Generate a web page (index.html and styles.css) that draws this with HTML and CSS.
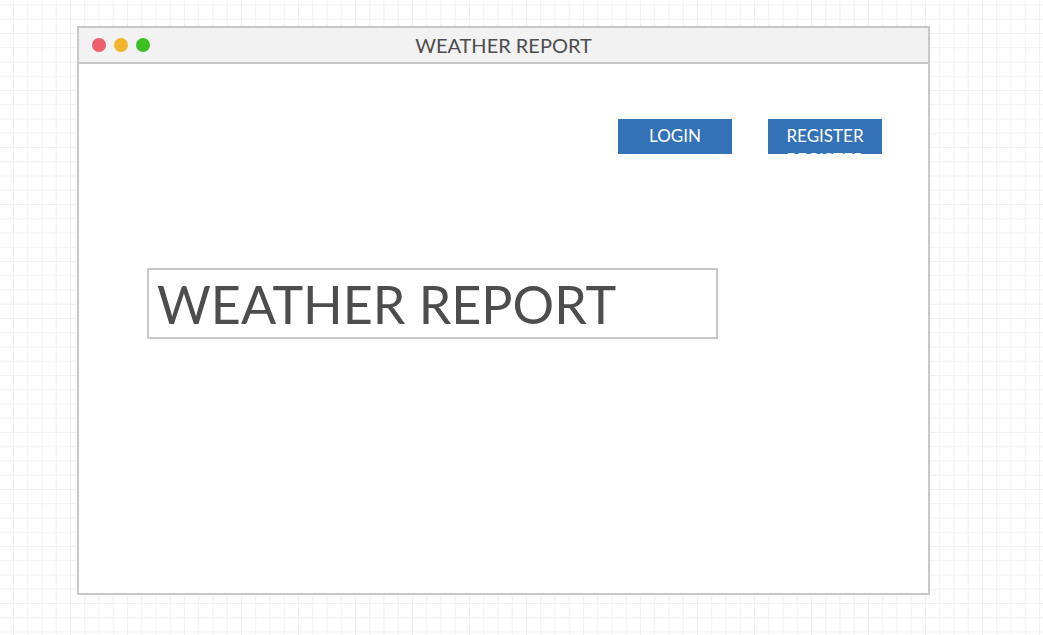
FILE: index.html
```html
<!DOCTYPE html>
<html>
<head>
<meta charset="utf-8">
<link rel="stylesheet" href="styles.css">
</head>
<body>
<div class="window">
  <div class="titlebar">
    <div class="dots">
      <span class="dot red"></span>
      <span class="dot yellow"></span>
      <span class="dot green"></span>
    </div>
    <div class="title">WEATHER REPORT</div>
  </div>
  <div class="content">
    <div class="actions">
      <div class="btn">LOGIN</div>
      <div class="btn">REGISTER REGISTER</div>
    </div>
    <div class="headline">WEATHER REPORT</div>
  </div>
</div>
</body>
</html>
```
FILE: styles.css
```css
html, body {
  margin: 0;
  padding: 0;
}
body {
  width: 1043px;
  height: 635px;
  overflow: hidden;
  box-sizing: border-box;
  padding: 26px 0 0 77px;
  font-family: Lato, "Liberation Sans", sans-serif;
  background-color: #ffffff;
  background-image:
    linear-gradient(to right, #f0f0f0 1px, transparent 1px),
    linear-gradient(to bottom, #f0f0f0 1px, transparent 1px);
  background-size: 14.25px 14.25px;
  background-position: 13px 4.5px;
}
.window {
  width: 853px;
  height: 569px;
  box-sizing: border-box;
  border: 2px solid #c8c8c8;
  background: #ffffff;
  display: flex;
  flex-direction: column;
}
.titlebar {
  height: 36px;
  flex: none;
  box-sizing: border-box;
  background: #f2f2f2;
  border-bottom: 2px solid #c8c8c8;
  position: relative;
  display: flex;
  align-items: center;
}
.dots {
  display: flex;
  gap: 8px;
  padding-left: 13px;
  margin-top: -1px;
}
.dot {
  width: 14px;
  height: 14px;
  border-radius: 50%;
  display: block;
}
.red { background: #ee5f6b; }
.yellow { background: #efb52f; }
.green { background: #3bc024; }
.title {
  position: absolute;
  left: 0;
  right: 0;
  top: 0;
  bottom: 0;
  display: flex;
  align-items: center;
  justify-content: center;
  font-size: 20px;
  color: #4d4d4d;
  margin-top: -1px;
}
.content {
  flex: 1;
  display: flex;
  flex-direction: column;
}
.actions {
  display: flex;
  justify-content: flex-end;
  gap: 36px;
  padding-right: 46px;
  margin-top: 55px;
}
.btn {
  width: 114px;
  height: 35px;
  background: #3472b8;
  color: #ffffff;
  font-size: 17px;
  text-align: center;
  line-height: 24px;
  padding-top: 5px;
  box-sizing: border-box;
  word-spacing: 100px;
  overflow: hidden;
}
.headline {
  margin-top: 114px;
  margin-left: 68px;
  width: 571px;
  height: 71px;
  box-sizing: border-box;
  border: 2px solid #c8c8c8;
  font-size: 52px;
  color: #4d4d4d;
  padding-left: 8px;
  line-height: 68px;
  white-space: nowrap;
}
```
